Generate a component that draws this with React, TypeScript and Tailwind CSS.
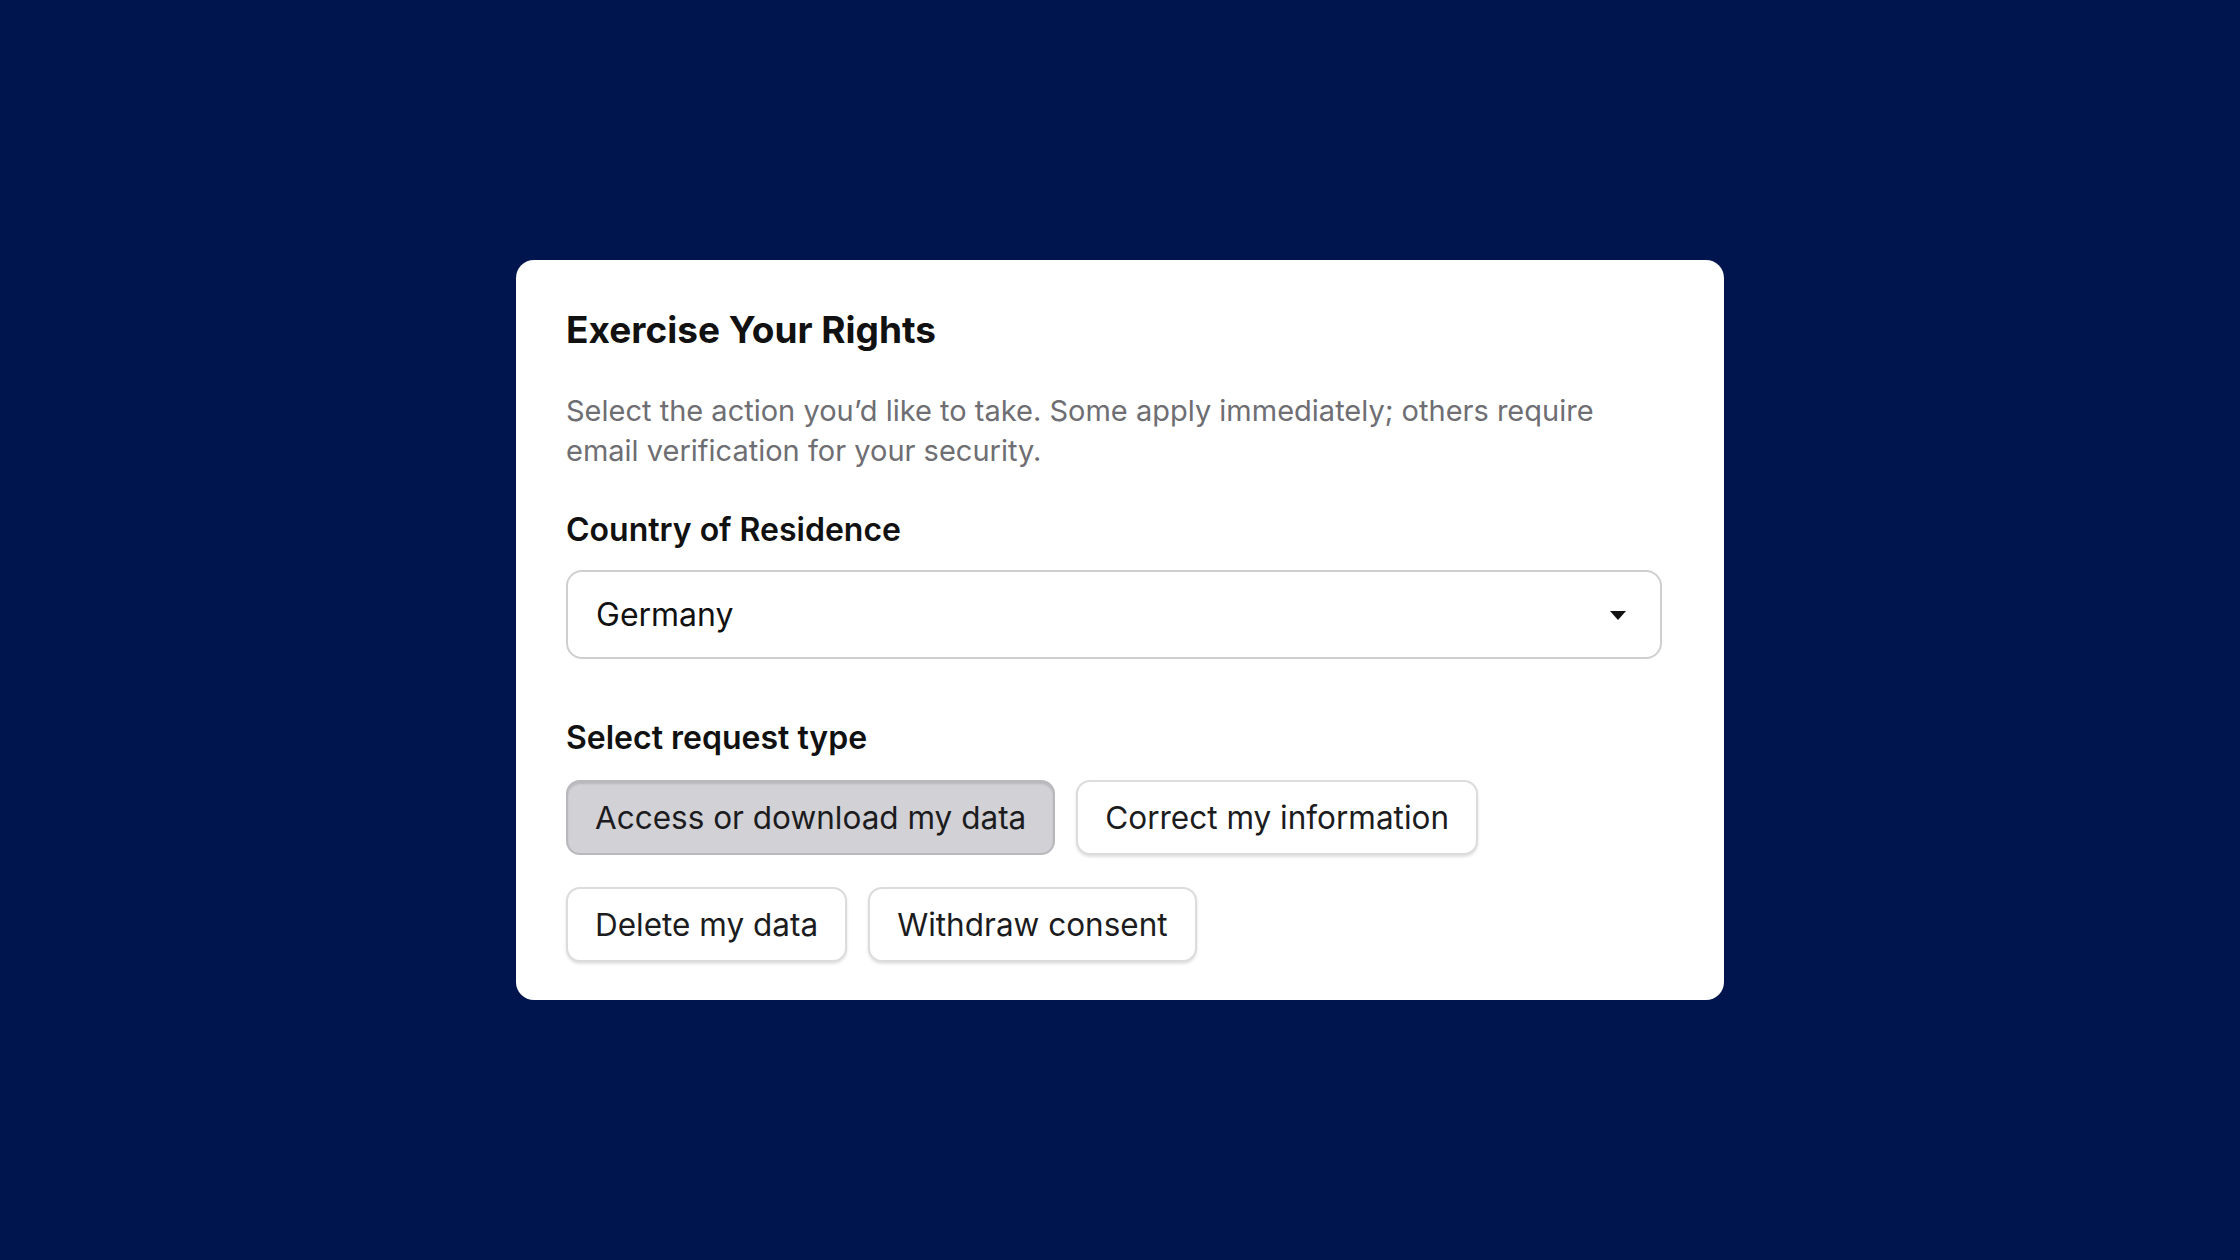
import { useState } from 'react';

const requestTypes = [
  'Access or download my data',
  'Correct my information',
  'Delete my data',
  'Withdraw consent',
];

export default function App() {
  const [selected, setSelected] = useState(requestTypes[0]);

  return (
    <div className="min-h-screen w-full bg-[#00144d] flex items-start justify-center pt-[260px] font-['Inter',sans-serif]">
      <div className="w-[1208px] bg-white rounded-[18px] pl-[50px] pr-[62px] pt-[48px] pb-[38px]">
        <h2 className="text-[37px] leading-[44px] font-bold text-[#111111]">
          Exercise Your Rights
        </h2>
        <p className="mt-[39px] text-[29px] leading-[40px] text-[#6e6e73]">
          Select the action you’d like to take. Some apply immediately; others require email verification for your security.
        </p>

        {/* Country */}
        <label className="block mt-[39px] text-[32px] leading-[40px] font-semibold text-[#111111]">
          Country of Residence
        </label>
        <div className="mt-[20px] h-[89px] w-full rounded-[16px] border-2 border-[#cfcfd2] flex items-center justify-between pl-[28px] pr-[34px]">
          <span className="text-[32px] text-[#111111]">Germany</span>
          <svg width="16" height="9" viewBox="0 0 16 9" className="mt-[2px]">
            <path d="M0 0 L16 0 L8 9 Z" fill="#111111" />
          </svg>
        </div>

        {/* Request type */}
        <div className="mt-[59px] text-[32px] leading-[40px] font-semibold text-[#111111]">
          Select request type
        </div>
        <div className="mt-[22px] flex flex-wrap gap-x-[21px] gap-y-[32px]">
          {requestTypes.map((type) => {
            const active = type === selected;
            return (
              <button
                key={type}
                onClick={() => setSelected(type)}
                className={
                  active
                    ? 'h-[75px] px-[27px] rounded-[14px] border-2 border-[#b8b8bd] bg-[#d1d1d6] text-[31.5px] text-[#1c1c1e] shadow-[inset_0_2px_2px_rgba(0,0,0,0.12)]'
                    : 'h-[75px] px-[27px] rounded-[14px] border-2 border-[#dcdcdf] bg-white text-[31.5px] text-[#1c1c1e] shadow-[0_2px_3px_rgba(0,0,0,0.12)]'
                }
              >
                {type}
              </button>
            );
          })}
        </div>
      </div>
    </div>
  );
}
